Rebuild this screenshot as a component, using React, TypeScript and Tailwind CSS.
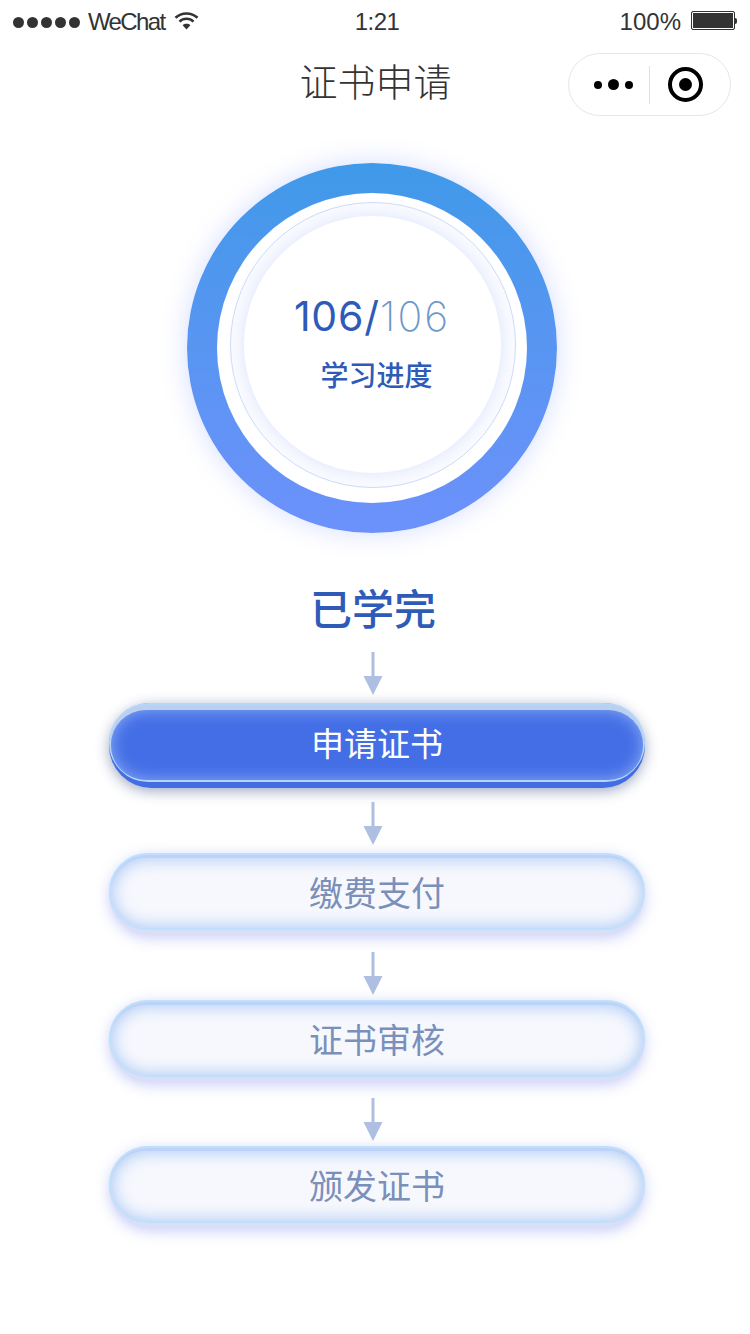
import React from 'react';

const STEPS = ['缴费支付', '证书审核', '颁发证书'];

function Arrow({ className }: { className: string }) {
  return (
    <svg width="20" height="43" viewBox="0 0 20 43" className={className}>
      <rect x="8.5" y="0" width="3" height="26" fill="#aebfe1" />
      <path d="M0.5 24H19.5L10 43Z" fill="#aebfe1" />
    </svg>
  );
}

function ActiveStep({ label }: { label: string }) {
  return (
    <div className="ml-[4px] h-[85px] w-[536px] rounded-full bg-[#436de2] shadow-[0_3px_14px_rgba(40,60,120,0.45)]">
      <div className="h-[79px] rounded-full border-2 border-[#b4d6fa] bg-[#bccfec] pt-[5px]">
        <div className="flex h-[70px] items-center justify-center rounded-full bg-[#436ee6] pb-[4px] text-[33px] text-white shadow-[inset_0_0_16px_rgba(190,215,255,0.6)]">
          {label}
        </div>
      </div>
    </div>
  );
}

function PendingStep({ label }: { label: string }) {
  return (
    <div className="ml-[4px] h-[82px] w-[536px] rounded-full bg-[#d9dff6] shadow-[0_3px_14px_rgba(110,125,235,0.38)]">
      <div className="h-[77px] rounded-full border-2 border-[#bfe0fc] bg-[#bcd2f6] pt-[3px]">
        <div className="flex h-[70px] items-center justify-center rounded-full bg-[#f7f8fd] pb-[4px] text-[34px] text-[#7a8fba] shadow-[inset_0_0_18px_rgba(160,195,245,1)]">
          {label}
        </div>
      </div>
    </div>
  );
}

export default function App() {
  return (
    <div className="flex h-[1334px] w-[750px] flex-col items-center overflow-hidden bg-white font-['Noto_Sans_CJK_SC',sans-serif]">
      {/* status bar */}
      <div className="flex h-[44px] w-full items-center justify-between px-[13px] font-['Liberation_Sans',sans-serif] text-[24px] tracking-[-0.6px] text-[#333333]">
        <div className="flex w-[300px] items-center">
          <div className="flex gap-[3px]">
            <span className="h-[11px] w-[11px] rounded-full bg-[#333333]" />
            <span className="h-[11px] w-[11px] rounded-full bg-[#333333]" />
            <span className="h-[11px] w-[11px] rounded-full bg-[#333333]" />
            <span className="h-[11px] w-[11px] rounded-full bg-[#333333]" />
            <span className="h-[11px] w-[11px] rounded-full bg-[#333333]" />
          </div>
          <span className="ml-[8px] tracking-[-1.6px]">WeChat</span>
          <svg width="25" height="19" viewBox="0 0 25 19" className="ml-[9px] mb-[3px]" fill="none" stroke="#333333" strokeWidth="2.6">
            <path d="M1.5 6.8C7.5 1 17.5 1 23.5 6.8" />
            <path d="M5.5 10.6C9.5 6.8 15.5 6.8 19.5 10.6" />
            <path d="M12.5 18.5L8.6 14.2C10.8 12.4 14.2 12.4 16.4 14.2Z" fill="#333333" stroke="none" />
          </svg>
        </div>
        <span className="ml-[4px]">1:21</span>
        <div className="flex w-[300px] items-center justify-end">
          <span className="tracking-normal">100%</span>
          <div className="ml-[10px] mb-[3px] h-[19px] w-[44px] rounded-[2px] border border-[#333333] bg-[#333333] shadow-[inset_0_0_0_1px_#ffffff]" />
          <div className="mb-[3px] h-[6px] w-[2px] rounded-r-[2px] bg-[#333333]" />
        </div>
      </div>

      {/* nav bar */}
      <div className="relative flex h-[82px] w-full items-center justify-center text-[38px] text-[#333333]">
        <span className="mt-[-12px] mr-[-1px] font-light">证书申请</span>
        <div className="absolute left-[568px] top-[9px] flex h-[63px] w-[163px] items-center rounded-full border border-[#e6e6e6] bg-white">
          <div className="flex w-[80px] items-center justify-center gap-[6px] pl-[9px]">
            <span className="h-[8px] w-[8px] rounded-full bg-black" />
            <span className="h-[11px] w-[11px] rounded-full bg-black" />
            <span className="h-[8px] w-[8px] rounded-full bg-black" />
          </div>
          <div className="h-[38px] w-px bg-[#e0e0e0]" />
          <div className="flex flex-1 items-center justify-center pr-[9px]">
            <div className="flex h-[35px] w-[35px] items-center justify-center rounded-full border-[4px] border-black">
              <span className="h-[13px] w-[13px] rounded-full bg-black" />
            </div>
          </div>
        </div>
      </div>

      {/* progress ring */}
      <div className="mt-[37px] mr-[6px] flex h-[370px] w-[370px] items-center justify-center rounded-full bg-gradient-to-b from-[#3f99e9] to-[#6c91fb] shadow-[0_0_26px_rgba(105,130,255,0.28)]">
        <div className="flex h-[310px] w-[310px] items-center justify-center rounded-full bg-white">
          <div className="mb-[6px] ml-[2px] flex h-[286px] w-[286px] items-center justify-center rounded-full border border-[#cddcfb] bg-[#fafbff]">
            <div className="mr-[2px] mb-[2px] flex h-[257px] w-[257px] flex-col items-center rounded-full bg-white pt-[75px] shadow-[0_0_16px_rgba(120,150,240,0.22)]">
              <div className="flex h-[52px] items-center font-['Inter',sans-serif] text-[41px] leading-none">
                <span className="font-normal tracking-[0.8px] text-[#2e5bb8]">106/</span>
                <span className="font-extralight tracking-[2px] text-[#6f97c9]">106</span>
              </div>
              <div className="mt-[11px] ml-[9px] text-[28px] leading-[40px] font-medium text-[#2e5bb8]">学习进度</div>
            </div>
          </div>
        </div>
      </div>

      <div className="mt-[46px] mr-[4px] text-[42px] leading-[56px] font-medium text-[#2e5bb8]">已学完</div>

      <Arrow className="mt-[17px] mb-[8px] mr-[4px]" />
      <ActiveStep label="申请证书" />
      <Arrow className="mt-[14px] mb-[8px] mr-[4px]" />

      <PendingStep label={STEPS[0]} />
      <Arrow className="mt-[17px] mb-[5px] mr-[4px]" />
      <PendingStep label={STEPS[1]} />
      <Arrow className="mt-[16px] mb-[5px] mr-[4px]" />
      <PendingStep label={STEPS[2]} />
    </div>
  );
}
